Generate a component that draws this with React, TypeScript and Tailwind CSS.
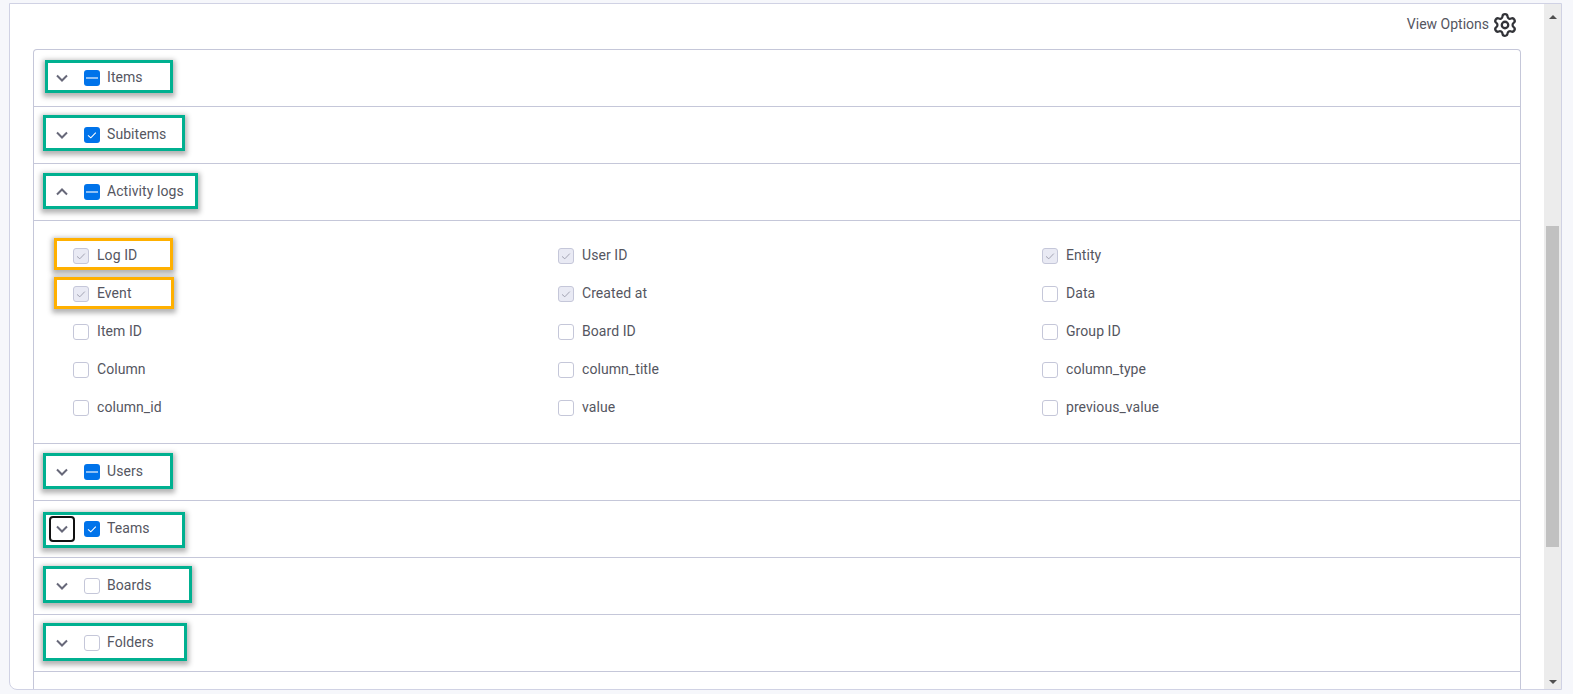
import React from "react";
import { Settings } from "lucide-react";

type State = "none" | "all" | "some" | "disabled";

function Box({ state }: { state: State }) {
  if (state === "none")
    return <span className="block w-4 h-4 shrink-0 rounded-[3px] border border-[#c5c7d9] bg-white" />;
  if (state === "disabled")
    return (
      <span className="flex items-center justify-center w-4 h-4 shrink-0 rounded-[3px] border border-[#c5c7d9] bg-[#e9eaf4]">
        <svg width="10" height="10" viewBox="0 0 10 10" fill="none" stroke="#a3a4b3" strokeWidth="1">
          <path d="M1 5.4 L3.8 7.8 L8.8 2.6" />
        </svg>
      </span>
    );
  return (
    <span className="flex items-center justify-center w-4 h-4 shrink-0 rounded-[3px] bg-[#0073ea]">
      {state === "all" ? (
        <svg width="10" height="10" viewBox="0 0 10 10" fill="none" stroke="#ffffff" strokeWidth="1.1">
          <path d="M1 5.4 L3.8 7.8 L8.8 2.6" />
        </svg>
      ) : (
        <span className="block w-3 h-[2px] bg-[#8fc0f5]" />
      )}
    </span>
  );
}

function Chevron({ open }: { open?: boolean }) {
  return (
    <svg width="12" height="8" viewBox="0 0 12 8" fill="none" stroke="#676879" strokeWidth="2">
      <path d={open ? "M1 6.5 L6 1.5 L11 6.5" : "M1 1.5 L6 6.5 L11 1.5"} />
    </svg>
  );
}

function Row({
  label,
  state,
  open,
  focus,
  hl,
}: {
  label: string;
  state: State;
  open?: boolean;
  focus?: boolean;
  hl: string;
}) {
  return (
    <div className="relative flex items-center h-[57px] shrink-0 border-b border-[#c5c7d9] pl-[15px]">
      <span
        className={
          focus
            ? "flex items-center justify-center w-[26px] h-[26px] rounded-[4px] border-2 border-[#111111]"
            : "flex items-center justify-center w-[26px] h-[26px]"
        }
      >
        <Chevron open={open} />
      </span>
      <span className="ml-[9px]">
        <Box state={state} />
      </span>
      <span className="ml-[7px] text-[14px] leading-5 -translate-y-px tracking-[0.005em]">{label}</span>
      <span className={hl} />
    </div>
  );
}

function Field({ label, state, hl }: { label: string; state: State; hl?: string }) {
  return (
    <div className="relative flex items-center h-[38px]">
      <Box state={state} />
      <span className="ml-2 text-[14px] leading-5 -translate-y-px tracking-[0.005em]">{label}</span>
      {hl ? <span className={hl} /> : null}
    </div>
  );
}

export default function App() {
  return (
    <div
      className="w-[1573px] h-[694px] overflow-hidden bg-[#f6f7fb] pl-[9px] pr-[11px] pt-[3px] pb-[4px] text-[#55565f]"
      style={{ fontFamily: "Roboto, 'Liberation Sans', sans-serif" }}
    >
      <div className="flex h-full bg-white border-t border-l border-b border-r border-[#d0d2e4] rounded-bl-[8px] overflow-hidden">
        <div className="flex-1 min-w-0 flex flex-col pl-[23px] pr-[23px]">
          <div className="flex items-center justify-end h-[45px] shrink-0 pr-[3px] pb-[3px]">
            <span className="text-[14px] leading-5 mr-[3px] -translate-y-px">View Options</span>
            <Settings size={26} strokeWidth={2.1} color="#323338" />
          </div>
          <div className="flex-1 min-h-0 flex flex-col border-t border-l border-r border-[#c5c7d9] rounded-t-[4px]">
            <Row
              label="Items"
              state="some"
              hl="absolute left-[11px] top-[10px] w-[128px] h-[33px] border-[3px] border-[#00b090] shadow-[0_2px_5px_2px_rgba(0,0,0,0.3)]"
            />
            <Row
              label="Subitems"
              state="all"
              hl="absolute left-[9px] top-[8px] w-[142px] h-[36px] border-[3px] border-[#00b090] shadow-[0_2px_5px_2px_rgba(0,0,0,0.3)]"
            />
            <Row
              label="Activity logs"
              state="some"
              open
              hl="absolute left-[9px] top-[9px] w-[155px] h-[36px] border-[3px] border-[#00b090] shadow-[0_2px_5px_2px_rgba(0,0,0,0.3)]"
            />
            <div className="grid grid-cols-[485px_484px_1fr] content-start h-[223px] shrink-0 border-b border-[#c5c7d9] pl-[39px] pt-[16px]">
              <Field
                label="Log ID"
                state="disabled"
                hl="absolute left-[-19px] top-[1px] w-[119px] h-[32px] border-[3px] border-[#ffb000] shadow-[0_2px_5px_2px_rgba(0,0,0,0.3)]"
              />
              <Field label="User ID" state="disabled" />
              <Field label="Entity" state="disabled" />
              <Field
                label="Event"
                state="disabled"
                hl="absolute left-[-19px] top-[2px] w-[120px] h-[32px] border-[3px] border-[#ffb000] shadow-[0_2px_5px_2px_rgba(0,0,0,0.3)]"
              />
              <Field label="Created at" state="disabled" />
              <Field label="Data" state="none" />
              <Field label="Item ID" state="none" />
              <Field label="Board ID" state="none" />
              <Field label="Group ID" state="none" />
              <Field label="Column" state="none" />
              <Field label="column_title" state="none" />
              <Field label="column_type" state="none" />
              <Field label="column_id" state="none" />
              <Field label="value" state="none" />
              <Field label="previous_value" state="none" />
            </div>
            <Row
              label="Users"
              state="some"
              hl="absolute left-[9px] top-[9px] w-[130px] h-[36px] border-[3px] border-[#00b090] shadow-[0_2px_5px_2px_rgba(0,0,0,0.3)]"
            />
            <Row
              label="Teams"
              state="all"
              focus
              hl="absolute left-[9px] top-[11px] w-[142px] h-[36px] border-[3px] border-[#00b090] shadow-[0_2px_5px_2px_rgba(0,0,0,0.3)]"
            />
            <Row
              label="Boards"
              state="none"
              hl="absolute left-[9px] top-[8px] w-[149px] h-[37px] border-[3px] border-[#00b090] shadow-[0_2px_5px_2px_rgba(0,0,0,0.3)]"
            />
            <Row
              label="Folders"
              state="none"
              hl="absolute left-[9px] top-[8px] w-[144px] h-[38px] border-[3px] border-[#00b090] shadow-[0_2px_5px_2px_rgba(0,0,0,0.3)]"
            />
          </div>
        </div>
        <div className="flex flex-col items-center justify-between w-[17px] shrink-0 bg-[#ececec] relative">
          <span className="mt-[11px] w-0 h-0 border-l-[4px] border-r-[4px] border-b-[4px] border-l-transparent border-r-transparent border-b-[#505050]" />
          <span className="absolute left-[2px] top-[222px] w-[13px] h-[321px] bg-[#c1c1c1]" />
          <span className="mb-[5px] w-0 h-0 border-l-[4px] border-r-[4px] border-t-[4px] border-l-transparent border-r-transparent border-t-[#505050]" />
        </div>
      </div>
    </div>
  );
}
